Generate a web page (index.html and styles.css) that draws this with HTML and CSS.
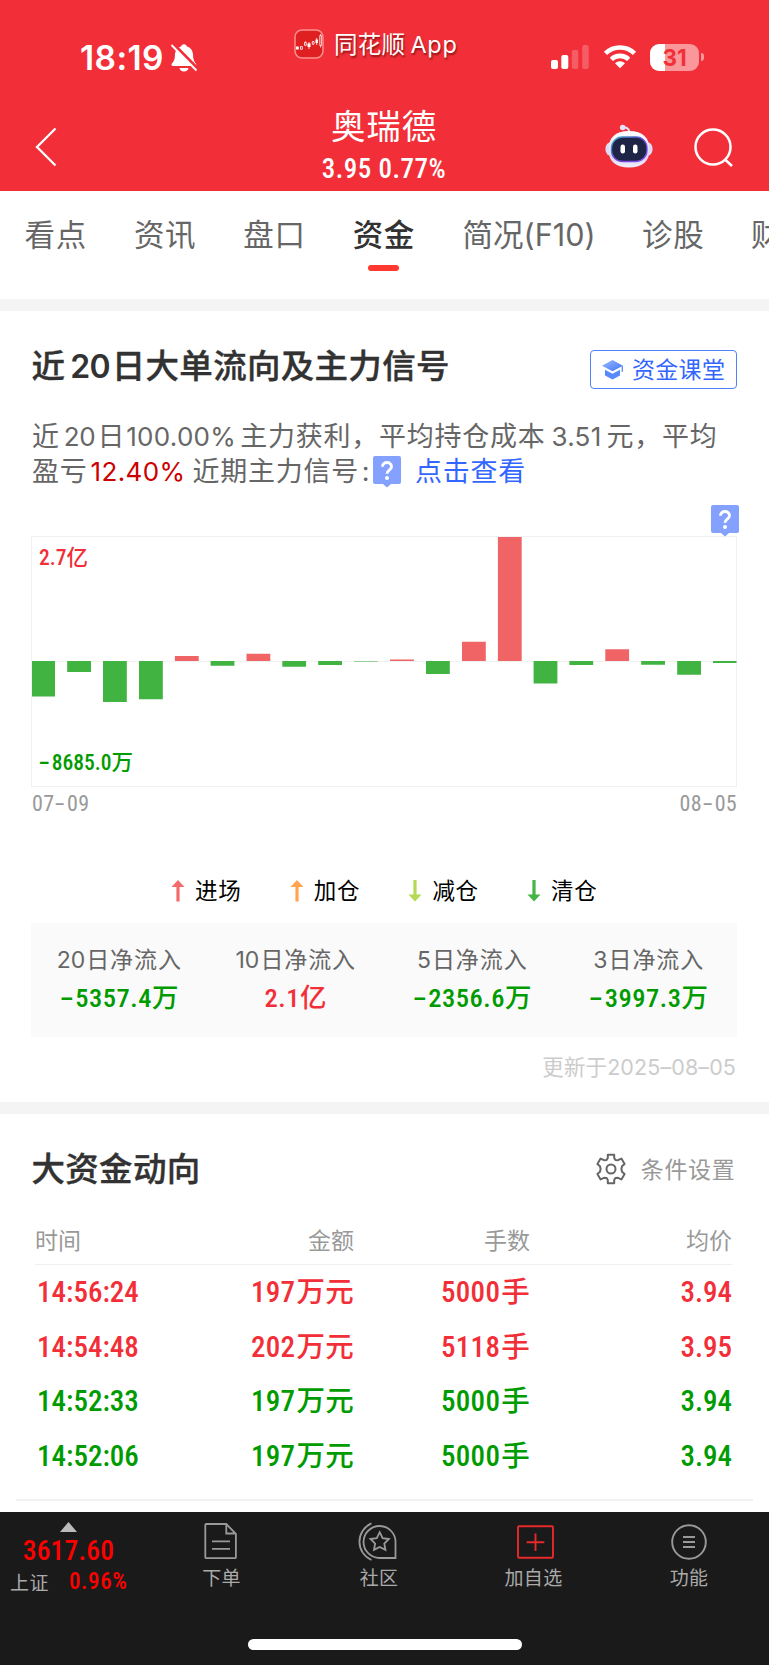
FILE: index.html
```html
<!DOCTYPE html>
<html lang="zh-CN">
<head>
<meta charset="utf-8">
<title>奥瑞德 资金</title>
<link rel="stylesheet" href="styles.css">
</head>
<body>
<header class="top">
  <div class="status">
    <span class="clock">18:19</span>
    <svg class="bell" width="28" height="30" viewBox="0 0 28 30"><path d="M14 1.200c1.700 0 2.700 1 2.900 2.300 4.200 1.300 6.100 4.700 6.200 8.800.1 4.500 1.200 6.300 2.700 8.100 1 1.300.6 2.600-.8 2.600H3c-1.500 0-2-1.400-.9-2.700 1.800-2 2.800-4 2.800-8 .1-4.100 2-7.500 6.200-8.800C11.300 2.200 12.300 1.200 14 1.200zM9.500 25h9c-.3 2-2 3.600-4.500 3.600S9.800 27 9.500 25z" fill="#fff"/><path d="M3 .5 28 26" stroke="#f22f38" stroke-width="3"/><path d="M1.500 2 26.500 27.500" stroke="#fff" stroke-width="1.900"/></svg>
    <svg class="applogo" width="30" height="30" viewBox="0 0 30 30"><rect x="1" y="1" width="28" height="28" rx="7" fill="#e02020" stroke="#f9908f" stroke-width="1.500"/><g fill="#fff"><path d="M2 17.500h2.800v3H2zM13.500 14.500h3v3.600h-3zM21.500 10.500h2.400v3.500h-2.400z"/></g><g fill="none" stroke="#fff" stroke-width=".8"><path d="M6.500 17.500h1.800v2.800H6.500zM10.500 13.500h1.800v2.800h-1.800zM18.300 12.500h1.700v2.700h-1.700zM25.800 6.500h1.600v10h-1.600zM11.400 12.300v1.200M15 13v7M22.700 9v7M26.600 5v1.500M26.600 16.500v2"/></g></svg>
    <span class="appname">同花顺<b>App</b></span>
    <svg class="signal" width="39" height="26" viewBox="0 0 39 26" fill="#fff"><rect x="0" y="16" width="7" height="9" rx="2"/><rect x="10.300" y="11" width="7" height="14" rx="2"/><rect x="20.800" y="6" width="6.500" height="19" rx="2" opacity=".22"/><rect x="31.200" y="1" width="6.500" height="24" rx="2" opacity=".22"/></svg>
    <svg class="wifi" width="34" height="25" viewBox="0 0 34 25" fill="none" stroke="#fff" stroke-width="4.600"><path d="M2.500 9.300a21 21 0 0 1 29 0"/><path d="M8.300 15.400a12.600 12.600 0 0 1 17.400 0"/><path d="M17 24.300l-5-5a7.200 7.200 0 0 1 10 0z" fill="#fff" stroke="none"/></svg>
    <div class="battery"><span>31</span></div><i class="nub"></i>
  </div>
  <div class="titlebar">
    <svg class="back" width="22" height="40" viewBox="0 0 22 40"><path d="M20.500 1.500 2 20l18.500 18.500" fill="none" stroke="#fff" stroke-width="2.300"/></svg>
    <div class="stock"><h1>奥瑞德</h1><p class="din">3.95 0.77%</p></div>
    <svg class="robot" width="48" height="44" viewBox="0 0 48 44"><defs><linearGradient id="shell" x1="0" y1="0" x2="0" y2="1"><stop offset="0" stop-color="#fff"/><stop offset=".7" stop-color="#d9d5f3"/><stop offset="1" stop-color="#f2effb"/></linearGradient><linearGradient id="rim" x1="0" y1="0" x2="1" y2="1"><stop offset="0" stop-color="#35b8c0"/><stop offset=".5" stop-color="#6a40d8"/><stop offset="1" stop-color="#8a55f0"/></linearGradient></defs><path d="M18 3.500q6.500-.5 6.500 6" fill="none" stroke="#e3def7" stroke-width="2.200"/><circle cx="17.700" cy="3.500" r="2.800" fill="#e6e2f7"/><rect x=".5" y="18" width="47" height="14" rx="6" fill="#dedaf5"/><path d="M24 7c14 0 20.500 7 20.500 18.500S38 43.500 24 43.500 3.500 37 3.500 25.500 10 7 24 7z" fill="url(#shell)"/><rect x="6.500" y="13" width="35.500" height="24.500" rx="11" fill="#1d2445" stroke="url(#rim)" stroke-width="1.300"/><rect x="15.500" y="20.500" width="4.500" height="9" rx="2.200" fill="#fff"/><rect x="28" y="20.500" width="4.500" height="9" rx="2.200" fill="#fff"/></svg>
    <svg class="search" width="42" height="42" viewBox="0 0 42 42" fill="none" stroke="#fff" stroke-width="2.500"><circle cx="20" cy="20" r="17.500"/><path d="m31.500 32 7.500 7"/></svg>
  </div>
</header>
<nav class="tabs">
  <a>看点</a><a>资讯</a><a>盘口</a><a class="on">资金</a><a class="f10">简况(F10)</a><a>诊股</a><a class="last">财</a>
</nav>
<section class="flow">
  <div class="head">
    <h2>近<span class="n20">20</span>日大单流向及主力信号</h2>
    <a class="lesson"><svg width="23" height="22" viewBox="0 0 23 22"><defs><linearGradient id="cap" x1="0" y1="0" x2="1" y2="1"><stop offset="0" stop-color="#9dbaff"/><stop offset="1" stop-color="#3f74fa"/></linearGradient></defs><path d="M11.500 1 1 6.700l10.500 5.600L22 6.700z" fill="url(#cap)"/><path d="M4 10.700v5.800l7.500 4 7.500-4v-5.800l-7.500 4z" fill="#5989fb"/><path d="M21.300 7v5.800" stroke="#5989fb" stroke-width="1.300"/></svg><span>资金课堂</span></a>
  </div>
  <div class="desc">
    <p>近<span class="num d20">20</span>日<span class="num d100">100.00%</span>主力获利，平均持仓成本<span class="num d351">3.51</span>元，平均</p>
    <p>盈亏<span class="num loss">12.40%</span>近期主力信号<span class="colon">:</span><svg class="tip" width="28" height="32" viewBox="0 0 28 32"><path d="M2 0h24q2 0 2 2v24q0 2-2 2h-8l-4 3.500-4-3.500H2q-2 0-2-2V2q0-2 2-2z" fill="#85a1ff"/><path d="M9.500 10.700c0-5.500 9-5.500 9-.2 0 3.600-4.500 3.600-4.500 7.200" fill="none" stroke="#fff" stroke-width="2.900"/><circle cx="14" cy="22" r="2" fill="#fff"/></svg><a>点击查看</a></p>
  </div>
  <div class="tiprow"><svg width="28" height="32" viewBox="0 0 28 32"><path d="M2 0h24q2 0 2 2v24q0 2-2 2h-8l-4 3.500-4-3.500H2q-2 0-2-2V2q0-2 2-2z" fill="#85a1ff"/><path d="M9.500 10.700c0-5.500 9-5.500 9-.2 0 3.600-4.500 3.600-4.500 7.200" fill="none" stroke="#fff" stroke-width="2.900"/><circle cx="14" cy="22" r="2" fill="#fff"/></svg></div>
  <div class="chart">
    <span class="max din">2.7亿</span>
    <span class="min din"><i class="dash">-</i>8685.0万</span>
    <svg width="706" height="251" viewBox="31 536 706 251">
      <path d="M32 661.500h705" stroke="#f1f1f1"/>
      <g fill="#40b340"><path d="M32 661h23v35.500H32zM67.200 661H91v11H67.200zM103 661h23.800v41H103zM139 661h23.800v38.200H139zM210.600 661h23.800v4.800h-23.800zM282.300 661h23.800v5.800h-23.800zM318.200 661H342v3.900h-23.800zM354 661h23.800v.5H354zM426 661h23.800v13H426zM533.600 661h23.800v22.500h-23.800zM569.400 661h23.800v4h-23.800zM641.200 661H665v3.800h-23.800zM677.200 661H701v13.700h-23.800zM713 661h23.500v2H713z"/></g>
      <g fill="#f16466"><path d="M174.900 655.900h23.800v5.100h-23.800zM246.500 653.800h23.800v7.200h-23.800zM390.100 659.500h23.800v1.500h-23.800zM462 641.800h23.800V661H462zM497.900 537h23.800v124h-23.800zM605.300 649.300h23.800V661h-23.800z"/></g>
    </svg>
  </div>
  <div class="dates din"><span>07<i class="dash">-</i>09</span><span>08<i class="dash">-</i>05</span></div>
  <div class="legend">
    <span><svg width="14" height="22" viewBox="0 0 14 22" fill="#f36b6b"><path d="M7 0l6.500 7H8.600v14.500H5.400V7H.5z"/></svg>进场</span>
    <span><svg width="14" height="22" viewBox="0 0 14 22" fill="#ffa54f"><path d="M7 0l6.500 7H8.600v14.500H5.400V7H.5z"/></svg>加仓</span>
    <span><svg width="14" height="22" viewBox="0 0 14 22" fill="#b4d957"><path d="M7 21.500l6.500-7H8.600V0H5.400v14.500H.5z"/></svg>减仓</span>
    <span><svg width="14" height="22" viewBox="0 0 14 22" fill="#45b545"><path d="M7 21.500l6.500-7H8.600V0H5.400v14.500H.5z"/></svg>清仓</span>
  </div>
  <div class="sums">
    <div><label><span>20</span>日净流入</label><b class="din down"><i class="dash">-</i>5357.4万</b></div>
    <div><label><span>10</span>日净流入</label><b class="din up">2.1亿</b></div>
    <div><label><span>5</span>日净流入</label><b class="din down"><i class="dash">-</i>2356.6万</b></div>
    <div><label><span>3</span>日净流入</label><b class="din down"><i class="dash">-</i>3997.3万</b></div>
  </div>
  <div class="updated">更新于<span>2025–08–05</span></div>
</section>
<section class="big">
  <div class="head">
    <h2>大资金动向</h2>
    <a class="setting"><svg width="32" height="32" viewBox="0 0 32 32" fill="none" stroke="#666" stroke-width="2" stroke-linejoin="round"><path d="M12.800 1.700h6.400v3.400l1.200 2 2.600.1 3.400-1.600 3.200 5.300-2.600 2.300-.6 2.800.6 2.800 2.600 2.300-3.200 5.300-3.400-1.600-2.600.1-1.200 2v3.400h-6.400v-3.400l-1.200-2-2.600-.1-3.400 1.600-3.200-5.300L5 18.800 5.600 16 5 13.200l-2.600-2.300 3.200-5.300L9 7.200l2.600-.1 1.200-2z"/><circle cx="16" cy="16" r="4.500"/></svg><span>条件设置</span></a>
  </div>
  <div class="table">
    <div class="row th"><span>时间</span><span>金额</span><span>手数</span><span>均价</span></div>
    <div class="row din up"><span>14:56:24</span><span>197<em>万元</em></span><span>5000<em>手</em></span><span>3.94</span></div>
    <div class="row din up"><span>14:54:48</span><span>202<em>万元</em></span><span>5118<em>手</em></span><span>3.95</span></div>
    <div class="row din down"><span>14:52:33</span><span>197<em>万元</em></span><span>5000<em>手</em></span><span>3.94</span></div>
    <div class="row din down"><span>14:52:06</span><span>197<em>万元</em></span><span>5000<em>手</em></span><span>3.94</span></div>
  </div>
  <div class="rule"></div>
</section>
<footer class="bar">
  <div class="items">
    <div class="index"><i class="tri"></i><b class="din">3617.60</b><p><span>上证</span><em class="din">0.96%</em></p></div>
    <div class="item i1"><svg width="38" height="40" viewBox="0 0 38 40" fill="none" stroke="#999" stroke-width="1.800"><path d="M3.300 2h20l9.600 9.800v23.400q0 1-1 1H3.300q-1 0-1-1V3q0-1 1-1zM23.300 2v9.500h9.600M9 19.300h18M9 26.800h18"/></svg><span>下单</span></div>
    <div class="item i2"><svg width="42" height="40" viewBox="0 0 42 40" fill="none" stroke="#999" stroke-width="1.800"><path d="M37.500 36V21A16 16 0 1 0 22 36zM13.500 1.300a20 20 0 0 0 0 36.700"/><path d="M21.700 10.200l2.900 5.900 6.300.9-4.600 4.500 1.100 6.400-5.700-3-5.700 3 1.100-6.400-4.600-4.500 6.300-.9z"/></svg><span>社区</span></div>
    <div class="item i3"><svg width="40" height="40" viewBox="0 0 40 40" fill="none" stroke="#e6292c" stroke-width="1.900"><rect x="4" y="4.300" width="35" height="31.500" rx="1"/><path d="M12.700 20.200h17.600M21.500 11.500V29"/></svg><span>加自选</span></div>
    <div class="item i4"><svg width="38" height="40" viewBox="0 0 38 40" fill="none" stroke="#999" stroke-width="1.900"><circle cx="19" cy="20" r="16.800"/><path d="M13 15h12M13 20h12M13 25h12"/></svg><span>功能</span></div>
  </div>
  <div class="home"></div>
</footer>
</body>
</html>
```

FILE: styles.css
```css
* { box-sizing: border-box; margin: 0; padding: 0; }
body { width: 769px; height: 1665px; overflow: hidden; background: #fff; font-family: Inter, "Noto Sans CJK SC", sans-serif; color: #323232; display: flex; flex-direction: column; }
svg { display: block; flex: none; }
i, em { font-style: normal; }
h1, h2, b { font-weight: inherit; }
.din { font-family: Roboto, "Noto Sans CJK SC", sans-serif; font-weight: 480; font-stretch: 85%; letter-spacing: .2px; }
.dash { display: inline-block; transform: scaleX(1.8); margin: 0 4px 0 3px; }
.up { color: #f22f38; }
.down { color: #009b00; }

.top { height: 191px; background: #f22f38; color: #fff; flex: none; }
.status { height: 88px; display: flex; align-items: flex-start; white-space: nowrap; }
.clock { margin: 38px 0 0 80px; width: 90px; font-size: 33.500px; line-height: 40px; font-weight: 600; letter-spacing: .4px; }
.bell { margin-top: 43px; }
.applogo { margin: 29px 0 0 96px; }
.appname { margin: 29px 0 0 10px; width: 208px; font-size: 23.500px; line-height: 32px; letter-spacing: .3px; text-shadow: 1px 2px 2px rgba(70,0,0,.6); }
.appname b { margin-left: 5px; letter-spacing: .7px; }
.signal { margin: 44px 0 0 9px; }
.wifi { margin: 44px 0 0 13px; }
.battery { margin: 44px 0 0 13px; width: 49px; height: 27px; border-radius: 9px; background: linear-gradient(90deg, #fff 15px, #f9979b 15px); text-align: center; font-size: 22.500px; line-height: 27px; font-weight: 700; color: #f22f38; }
.nub { width: 3px; height: 8px; margin: 53px 0 0 2px; border-radius: 0 3px 3px 0; background: #f9979b; }
.titlebar { height: 103px; display: flex; align-items: flex-start; }
.back { margin: 39px 0 0 35px; }
.stock { width: 300px; margin-left: 177px; text-align: center; }
.stock h1 { margin-top: 19px; font-size: 34.500px; line-height: 40px; letter-spacing: .8px; font-weight: 400; }
.stock p { margin-top: 6px; font-size: 27px; line-height: 32px; letter-spacing: .5px; }
.robot { margin: 36px 0 0 71px; }
.search { margin: 39px 0 0 40px; }

.tabs { height: 120px; border-bottom: 12px solid #f4f4f4; padding: 24px 0 0 24px; display: flex; gap: 46px; overflow: hidden; font-size: 30.500px; line-height: 40px; color: #666; white-space: nowrap; letter-spacing: .7px; flex: none; }
.tabs a { flex: none; width: 63.400px; display: flex; flex-direction: column; align-items: center; }
.tabs .f10 { width: 133px; letter-spacing: 0; margin-left: 1px; }
.tabs .last { align-items: flex-start; }
.tabs .on { color: #323232; font-weight: 500; }
.on::after { content: ""; width: 31px; height: 6px; margin-top: 10px; border-radius: 3px; background: #ff3830; }

.flow { height: 803px; border-bottom: 12px solid #f4f4f4; padding: 0 32px; flex: none; }
.head { display: flex; justify-content: space-between; align-items: center; }
.flow .head { height: 39px; margin-top: 39px; }
h2 { margin-left: -.5px; font-size: 33.500px; line-height: 40px; font-weight: 500; -webkit-text-stroke: .4px #323232; letter-spacing: .3px; white-space: nowrap; }
.flow h2 { margin-top: -6px; }
.big h2 { margin-top: -2px; }
.n20 { margin: 0 2px 0 5px; font-size: 32px; font-weight: 600; letter-spacing: -.8px; -webkit-text-stroke: 0; }
.lesson { width: 147px; height: 39px; border: 1.500px solid #4d82ff; border-radius: 4px; display: flex; align-items: center; padding-left: 10px; gap: 8px; font-size: 23px; color: #3366ff; letter-spacing: .3px; white-space: nowrap; }
.lesson span { margin-top: -4px; }
.desc { margin-top: 30px; font-size: 27px; line-height: 35px; letter-spacing: .75px; color: #666; white-space: nowrap; }
.desc p { height: 35px; display: flex; }
.num { font-size: 26px; letter-spacing: -.3px; }
.d20 { margin: 0 2px 0 4px; } .d100 { margin: 0 4px 0 1px; letter-spacing: .3px; } .d351 { margin: 0 5px 0 6px; letter-spacing: .3px; }
.loss { color: #cc0000; width: 96px; margin: 0 6px 0 3px; letter-spacing: .4px; }
.colon { width: 14px; text-align: center; }
.desc .tip { margin-top: 2px; }
.desc a { color: #3366ff; margin-left: 14px; }
.tiprow { height: 32px; margin-top: 16px; display: flex; justify-content: flex-end; margin-right: -2px; }
.chart { height: 251px; margin: -1px 0 0 -1px; width: 706px; border: 1.500px solid #f1f1f1; display: grid; }
.chart > * { grid-area: 1 / 1; }
.chart svg { margin: -1px; }
.chart .din { font-size: 21.500px; line-height: 24px; z-index: 1; letter-spacing: 0; }
.max { margin: 9px 0 0 7px; color: #f22f38; }
.min { align-self: end; margin: 0 0 11px 6px; color: #009b00; }
.dates { display: flex; justify-content: space-between; margin: 4px 0 0; font-size: 22px; line-height: 26px; color: #999; }
.dates.din { font-weight: 450; letter-spacing: .3px; }
.legend { display: flex; margin: 61px 0 0 139px; height: 26px; font-size: 22.500px; line-height: 26px; color: #000; letter-spacing: .7px; }
.legend span { width: 118.700px; display: flex; align-items: center; gap: 10px; }
.sums { height: 114px; margin: 19px 0 0 -1px; width: 706px; background: #fafafa; display: grid; grid-template-columns: repeat(4, 1fr); text-align: center; padding-top: 21px; }
.sums div { display: flex; flex-direction: column; align-items: center; }
.sums label { font-size: 23px; line-height: 32px; letter-spacing: .9px; color: #666; }
.sums label span { margin-right: 1px; letter-spacing: 0; }
.sums b { font-size: 26.500px; line-height: 36px; margin-top: 4px; letter-spacing: .5px; }
.updated { margin: 15px 1px 0 0; text-align: right; font-size: 21.500px; line-height: 30px; color: #ccc; letter-spacing: .1px; }

.big { height: 398px; padding: 0 32px; flex: none; }
.big .head { height: 40px; margin-top: 36px; }
.setting { display: flex; align-items: center; gap: 14px; font-size: 23px; letter-spacing: .7px; color: #999; margin: -3px 1.500px 0 0; }
.setting span { margin-top: -2px; }
.setting svg { margin-left: -1px; }
.table { margin: 32px 5px 0 3px; }
.row { display: grid; grid-template-columns: 120px 199px 176px 1fr; height: 54.700px; line-height: 54px; font-size: 29px; text-align: right; white-space: nowrap; }
.row span:first-child { text-align: left; padding-left: 2px; }
.row em { font-size: 28.500px; margin-left: 1px; }
.row.din { letter-spacing: .3px; }
.row.din span:first-child, .row.din span:last-child { letter-spacing: 0; }
.row.th { height: 43px; line-height: 38px; font-size: 23px; color: #999; border-bottom: 1px solid #efefef; }
.row.th span:first-child { padding-left: 0; }
.rule { height: 2px; background: #f2f2f2; margin: 15px -16px 0; }

.bar { height: 153px; background: #1a1a1a; flex: none; color: #aaa; }
.items { display: flex; height: 127px; }
.index { width: 137px; color: #f00; display: flex; flex-direction: column; align-items: center; }
.tri { width: 17px; height: 10px; margin-top: 10px; background: #bbb; clip-path: polygon(50% 0, 100% 100%, 0 100%); }
.index b { font-size: 27.500px; line-height: 32px; margin-top: 3px; }
.index p { display: flex; align-items: center; gap: 20px; width: 130px; height: 28px; font-size: 19px; white-space: nowrap; align-self: flex-start; padding-left: 10px; letter-spacing: .5px; }
.index p span { color: #aaa; }
.index em { font-size: 23px; letter-spacing: .6px; }
.item { display: flex; flex-direction: column; align-items: center; font-size: 19px; line-height: 28px; padding-top: 10px; white-space: nowrap; gap: 3px; letter-spacing: .3px; }
.i1 { width: 169px; } .i2 { width: 146px; } .i3 { width: 163px; } .i4 { width: 148px; }
.home { width: 274px; height: 11px; margin: 0 auto; border-radius: 6px; background: #fff; }
```
